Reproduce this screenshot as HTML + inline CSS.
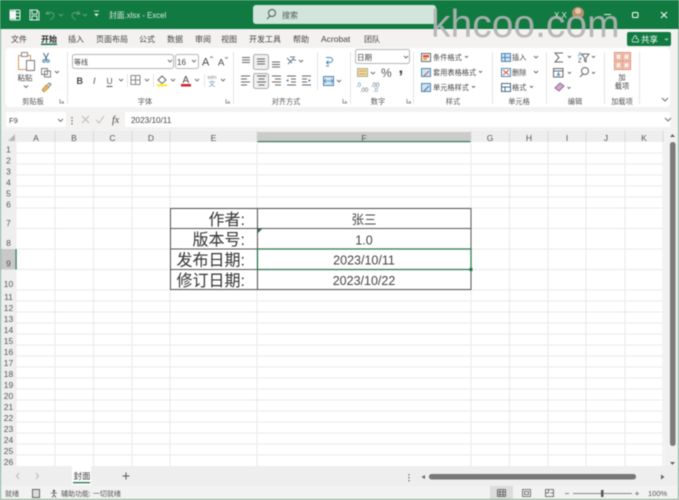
<!DOCTYPE html>
<html lang="zh"><head><meta charset="utf-8"><title>封面.xlsx - Excel</title>
<style>
html,body{margin:0;padding:0;width:679px;height:500px;overflow:hidden;background:#f3f2f1}
svg{display:block;filter:blur(.4px)}
text{font-family:"Liberation Sans","Noto Sans CJK SC",sans-serif}
.g{font-size:7.2px;fill:#555;text-anchor:middle}
.h{font-size:8.5px;fill:#555;text-anchor:middle}
.r{font-size:8.5px;fill:#555;text-anchor:middle}
.s{font-size:7.2px;fill:#444}
.b{font-size:16px;fill:#333;text-anchor:end}
.c{font-size:12.5px;fill:#444;text-anchor:middle}
.ch{fill:none;stroke:#666;stroke-width:.9}
.i{fill:none;stroke:#666;stroke-width:1}
</style></head><body>
<svg width="679" height="500" viewBox="0 0 679 500" xmlns="http://www.w3.org/2000/svg">
<rect width="679" height="500" fill="#f3f2f1"/>
<!-- title bar -->
<rect width="679" height="29" fill="#117a41"/>
<rect x="10" y="10" width="10" height="10" rx="1" fill="none" stroke="#e8f2ec"/>
<path d="M15 10v10M15 13h5M15 16.500h5" stroke="#e8f2ec" fill="none"/>
<rect x="10" y="11" width="6" height="8" fill="#f4f8f5"/>
<path d="M30 10h7l2 2v8h-9zM32 10v4h5v-4M32 20v-4h5v4" fill="none" stroke="#dcebe2"/>
<path d="M48 11l-2 3h4M47 13.500c3-2 7-1 7 2 0 2-2 3.500-4 4" fill="none" stroke="#5f9f7d"/>
<path d="M59 14l2 2 2-2" fill="none" stroke="#5f9f7d"/>
<path d="M78 11l2 3h-4M79 13.500c-3-2-7-1-7 2 0 2 2 3.500 4 4" fill="none" stroke="#5f9f7d"/>
<path d="M83 14l2 2 2-2" fill="none" stroke="#5f9f7d"/>
<path d="M94 11h5M95 14l1.500 2 1.500-2z" fill="#dcebe2" stroke="#dcebe2" stroke-width=".8"/>
<text x="109" y="18" style="font-size:7.800px;fill:#dcebe2">封面.xlsx - Excel</text>
<rect x="253" y="5" width="183" height="19" rx="3" fill="#d2e5da"/>
<circle cx="272" cy="13" r="3.500" fill="none" stroke="#4d5a52"/><path d="M270 16l-3 3" stroke="#4d5a52"/>
<text x="282" y="18" style="font-size:8px;fill:#4d5a52">搜索</text>
<text x="554" y="18" style="font-size:8px;fill:#e8f2ec">X X</text>
<circle cx="578" cy="13" r="6" fill="#b59070"/><circle cx="578" cy="11" r="3" fill="#e3c6a6"/>
<path d="M604 14.500h7" stroke="#e8f2ec"/>
<rect x="632.500" y="12.500" width="5.500" height="5" rx="1" fill="none" stroke="#fff"/>
<path d="M661 12l6 6M667 12l-6 6" stroke="#fff"/>
<!-- tabs -->
<g style="font-size:8px;fill:#444">
<text x="11" y="42">文件</text><text x="41" y="42" style="font-weight:bold;fill:#222">开始</text>
<text x="68" y="42">插入</text><text x="96" y="42">页面布局</text><text x="139" y="42">公式</text>
<text x="167" y="42">数据</text><text x="195" y="42">审阅</text><text x="221" y="42">视图</text>
<text x="249" y="42">开发工具</text><text x="293" y="42">帮助</text><text x="321" y="42" style="font-size:8.500px">Acrobat</text><text x="364" y="42">团队</text>
</g>
<rect x="41" y="43.500" width="16" height="1.500" fill="#117a41"/>
<rect x="627" y="32" width="44" height="14" rx="2" fill="#117a41"/>
<path d="M632.500 42h6v-2.500l-1.500-1h-1l.8-2-1.800-1-1.500 2v1l-1.500 1z" fill="none" stroke="#e8f2ec" stroke-width=".7"/>
<text x="641" y="42.500" style="font-size:8.500px;fill:#fff">共享</text>
<path d="M665 38.500l1.500 1.500 1.500-1.500" fill="none" stroke="#e8f2ec" stroke-width=".8"/>
<!-- ribbon -->
<rect x="5.500" y="48" width="664.500" height="59" rx="4" fill="#fff"/>
<path d="M67.500 52v52M233.500 52v52M317.500 52v38M350.500 52v52M413.500 52v52M492.500 52v52M546.500 52v52M604.500 52v52M639.500 52v52" stroke="#e3e3e3"/>
<!-- clipboard -->
<path d="M18.500 55.500h12v14h-12z" fill="#fff" stroke="#d09a5c"/><path d="M21.500 52.500h6v4h-6z" fill="#fff" stroke="#888"/>
<rect x="26.500" y="60.500" width="8" height="10" fill="#fff" stroke="#777"/>
<text x="25" y="80.500" class="g" style="font-size:7.500px;fill:#444">粘贴</text><path d="M24 85.500l2 2 2-2" class="ch"/>
<path d="M43.500 53l3.500 7M48.500 53l-3.500 7" stroke="#4a6b8a" fill="none"/><circle cx="44" cy="61" r="1.300" fill="none" stroke="#4a8ab0"/><circle cx="48" cy="61" r="1.300" fill="none" stroke="#4a8ab0"/>
<path d="M41.500 68.500h6v6h-6zM44.500 71h6v6h-6z" fill="#fff" stroke="#777" stroke-width=".9"/>
<path d="M55 71l2 2 2-2" class="ch"/>
<path d="M42 90l4-5 3 2.500-5 4.500z" fill="#e9b960" stroke="#b08840" stroke-width=".7"/><path d="M47 85l2.500-2 1.500 1.500-2.500 2.500" stroke="#777" fill="none"/>
<text x="33" y="104" class="g">剪贴板</text>
<path d="M60 99v4h4M62 101l2 2" stroke="#777" fill="none" stroke-width=".8"/>
<!-- font -->
<rect x="72.500" y="54.500" width="101" height="14" rx="2" fill="#fff" stroke="#b5b5b5"/>
<text x="74" y="64.500" style="font-size:7px;fill:#444">等线</text><path d="M168 60l2 2 2-2" class="ch"/>
<rect x="175.500" y="54.500" width="23" height="14" rx="2" fill="#fff" stroke="#b5b5b5"/>
<text x="177" y="65" style="font-size:8px;fill:#444">16</text><path d="M192 60l2 2 2-2" class="ch"/>
<text x="202" y="65.500" style="font-size:11px;fill:#444">A</text><path d="M210 58l1.500-1.500 1.500 1.500" class="ch" style="stroke-width:.7"/>
<text x="218" y="65.500" style="font-size:9.500px;fill:#444">A</text><path d="M225 57l1.500 1.500 1.500-1.500" class="ch" style="stroke-width:.7"/>
<text x="76.500" y="84" style="font-size:9px;font-weight:bold;fill:#444">B</text>
<text x="93" y="84" style="font-size:9px;font-style:italic;fill:#555">I</text>
<text x="106.500" y="84" style="font-size:8.500px;fill:#555">U</text><path d="M106.500 86.500h6" stroke="#555"/>
<path d="M119 79l2 2 2-2" class="ch"/><path d="M127.500 74v13" stroke="#e3e3e3"/>
<path d="M131 75.500h9v9h-9zM135.500 75.500v9M131 80h9" fill="none" stroke="#888"/>
<path d="M145 79l2 2 2-2" class="ch"/><path d="M153.500 74v13" stroke="#e3e3e3"/>
<path d="M158 80l4-4 4 4-4 3.500z" fill="#fff" stroke="#666"/><rect x="157" y="84" width="10" height="2.500" fill="#ffe94a"/>
<path d="M171 79l2 2 2-2" class="ch"/>
<text x="182.500" y="83" style="font-size:10px;fill:#444">A</text><rect x="181" y="84" width="10" height="2.500" fill="#d6202a"/>
<path d="M195 79l2 2 2-2" class="ch"/><path d="M204.500 74v13" stroke="#e3e3e3"/>
<text x="212" y="79" class="g" style="font-size:5px;fill:#888">wén</text>
<text x="212" y="86" class="g" style="font-size:7px;fill:#6a93b0">文</text>
<path d="M221 79l2 2 2-2" class="ch"/>
<text x="145" y="104" class="g">字体</text>
<path d="M226 99v4h4M228 101l2 2" stroke="#777" fill="none" stroke-width=".8"/>
<!-- alignment -->
<rect x="253.500" y="54.500" width="15" height="15" rx="2" fill="#f0f0f0" stroke="#aaa"/>
<rect x="253.500" y="73.500" width="15" height="15" rx="2" fill="#f0f0f0" stroke="#aaa"/>
<path d="M242 57.500h8M242 60h8M242 62.500h8M257 59h8M257 61.500h8M257 64h8M272 62h8M272 64.500h8M272 67h8" class="i"/>
<path d="M241 76h9M241 79h6M241 82h9M241 85h6M257 76h9M258.500 79h6M257 82h9M258.500 85h6M272 76h9M275 79h6M272 82h9M275 85h6" class="i"/>
<path d="M288 64l6-6M290 57h5M293 60h3" fill="none" stroke="#5a7f9c"/><path d="M287 58l5 5" stroke="#777"/>
<path d="M299 60l2 2 2-2" class="ch"/>
<path d="M287 76h9M287 85h9M291 79h5M291 82h5" class="i"/><path d="M286 80.500l2.500-1.500v3z" fill="#3f8ac0"/>
<path d="M302 76h9M302 85h9M302 79h5M302 82h5" class="i"/><path d="M311 80.500l-2.500-1.500v3z" fill="#3f8ac0"/>
<path d="M326 57.500h4a2.500 2.500 0 0 1 0 5h-3M328.500 60.500l-2 2 2 2M326 66h3" fill="none" stroke="#4a86b5"/>
<rect x="323.500" y="76.500" width="10" height="9" fill="#d6e6f2" stroke="#4a86b5"/><path d="M323.500 81h10M326 79l-2 2 2 2M331 79l2 2-2 2" stroke="#4a86b5" fill="none" stroke-width=".7"/>
<path d="M337 80l2 2 2-2" class="ch"/>
<text x="286" y="104" class="g">对齐方式</text>
<path d="M343 99v4h4M345 101l2 2" stroke="#777" fill="none" stroke-width=".8"/>
<!-- number -->
<rect x="355.500" y="49.500" width="54" height="14" rx="2" fill="#fff" stroke="#b5b5b5"/>
<text x="357" y="60" style="font-size:7.500px;fill:#444">日期</text><path d="M404 56l2 2 2-2" class="ch"/>
<rect x="357.500" y="68.500" width="10" height="8" fill="#f0d9a0" stroke="#8fa87f" stroke-width=".8"/><path d="M359 71h7M359 74h7" stroke="#d98a40" stroke-width=".8"/>
<path d="M371 72l2 2 2-2" class="ch"/>
<text x="381" y="77" style="font-size:12px;fill:#555">%</text>
<text x="398.500" y="73" style="font-size:17px;font-weight:bold;fill:#444">,</text>
<text x="356" y="87" style="font-size:6px;fill:#3f8ac0">.0</text><text x="360" y="92" style="font-size:6px;fill:#666">.00</text>
<text x="371" y="87" style="font-size:6px;fill:#666">.00</text><text x="373" y="92" style="font-size:6px;fill:#3f8ac0">.0</text>
<text x="378" y="104" class="g">数字</text>
<path d="M407 99v4h4M409 101l2 2" stroke="#777" fill="none" stroke-width=".8"/>
<!-- styles -->
<rect x="421.500" y="53.500" width="9" height="8" fill="#fff" stroke="#666"/><rect x="423" y="55" width="6" height="2.500" fill="#d95040"/><rect x="423" y="58" width="4" height="2" fill="#e8a040"/>
<rect x="421.500" y="68.500" width="9" height="8" fill="#cfe2f1" stroke="#4a86b5"/><path d="M424 76l5-5" stroke="#c05a3a"/>
<rect x="421.500" y="83.500" width="9" height="8" fill="#cfe2f1" stroke="#4a86b5"/><path d="M424 91l5-5" stroke="#4a6b8a"/>
<text x="433" y="60" class="s">条件格式</text><path d="M465 56l1.500 1.500 1.500-1.500" class="ch"/>
<text x="433" y="75" class="s">套用表格格式</text><path d="M479 71l1.500 1.500 1.500-1.500" class="ch"/>
<text x="433" y="90" class="s">单元格样式</text><path d="M472 86l1.500 1.500 1.500-1.500" class="ch"/>
<text x="453" y="104" class="g">样式</text>
<!-- cells -->
<rect x="501.500" y="53.500" width="9" height="8" fill="#cfe2f1" stroke="#4a86b5"/><path d="M505 53.500v8M501.500 57.500h9" stroke="#4a86b5"/>
<rect x="501.500" y="68.500" width="9" height="8" fill="#fff" stroke="#4a86b5"/><path d="M503 70l6 5M509 70l-6 5" stroke="#d0503a"/>
<rect x="501.500" y="83.500" width="9" height="8" fill="#fff" stroke="#4a6b8a"/><path d="M501.500 87h9M505 87v4.500" stroke="#4a6b8a"/>
<text x="512" y="60" class="s">插入</text><path d="M534 56l2 2 2-2" class="ch"/>
<text x="512" y="75" class="s">删除</text><path d="M534 71l2 2 2-2" class="ch"/>
<text x="512" y="90" class="s">格式</text><path d="M530 86l1.500 1.500 1.500-1.500" class="ch"/>
<text x="519" y="104" class="g">单元格</text>
<!-- editing -->
<path d="M563 53h-8l4 4.500-4 4.500h8" fill="none" stroke="#666"/><path d="M568 56l1.500 1.500 1.500-1.500" class="ch"/>
<text x="578" y="56.500" style="font-size:6px;fill:#3f7fb0">A</text><text x="578" y="62.500" style="font-size:6px;fill:#444">Z</text>
<path d="M582 54h7l-3 4v4l-1.500-1v-3z" fill="none" stroke="#666"/><path d="M592 56l1.500 1.500 1.500-1.500" class="ch"/>
<rect x="553.500" y="68.500" width="9.500" height="8.500" fill="#fff" stroke="#666"/><path d="M553.500 71h9.500" stroke="#666"/><path d="M558.500 72v3M557 74l1.500 1.500 1.500-1.500" stroke="#3f8ac0" fill="none"/>
<path d="M568 72l1.500 1.500 1.500-1.500" class="ch"/>
<circle cx="585" cy="71" r="3.500" fill="none" stroke="#666"/><path d="M583 74l-3 3" stroke="#666"/><path d="M592 72l1.500 1.500 1.500-1.500" class="ch"/>
<path d="M555 88l5-5 4 3-5 5z" fill="#d9a8c8" stroke="#8a6a9a"/><path d="M567.500 87l1.500 1.500 1.500-1.500" class="ch"/>
<text x="575" y="104" class="g">编辑</text>
<!-- addins -->
<rect x="614.500" y="52.500" width="16" height="17" fill="#fbeee9" stroke="#e08a70"/>
<path d="M622.500 52.500v17M614.500 61h16" stroke="#e08a70"/>
<rect x="616" y="54" width="5" height="5.500" fill="none" stroke="#e08a70" stroke-width=".7"/><rect x="624" y="54" width="5" height="5.500" fill="none" stroke="#e08a70" stroke-width=".7"/><rect x="616" y="62.500" width="5" height="5.500" fill="none" stroke="#e08a70" stroke-width=".7"/><rect x="624" y="62.500" width="5" height="5.500" fill="none" stroke="#e08a70" stroke-width=".7"/>
<text x="622" y="80" class="g" style="fill:#444">加</text><text x="622" y="88.500" class="g" style="fill:#444">载项</text>
<text x="622" y="104" class="g">加载项</text>
<path d="M662 98l3 3 3-3" class="ch"/>
<!-- formula bar -->
<rect x="6" y="112" width="60" height="15" rx="2" fill="#fff"/>
<text x="9" y="123" style="font-size:7.500px;fill:#444">F9</text><path d="M58 119l2.500 2.500 2.500-2.500" class="ch"/>
<path d="M72 117v1.500M72 120v1.500M72 123v1.500" stroke="#555"/>
<path d="M82 116l7 7M89 116l-7 7" stroke="#bbb"/><path d="M96 120l3 3 5-7" fill="none" stroke="#bbb"/>
<text x="112" y="123" style="font-size:10px;font-style:italic;font-family:'Liberation Serif',serif;fill:#444">fx</text>
<rect x="125" y="112" width="545" height="15" rx="2" fill="#fff"/>
<text x="131" y="123" style="font-size:8.200px;fill:#444">2023/10/11</text>
<path d="M665 118l3 3 3-3" class="ch"/>
<!-- sheet -->
<rect x="0" y="131" width="664" height="335" fill="#fff"/>
<rect x="0" y="131" width="664" height="11" fill="#eeeeee"/>
<rect x="0" y="142" width="16.500" height="324" fill="#eeeeee"/>
<rect x="257" y="132" width="214" height="10" fill="#cbcbcb"/><rect x="257" y="141" width="214" height="1.200" fill="#2f7a55"/>
<rect x="0" y="249" width="16.500" height="20.500" fill="#c8c8c8"/><rect x="15.500" y="249" width="1.200" height="20.500" fill="#2f7a55"/>
<path d="M15 134v7h-7z" fill="#b8b8b8"/>
<path d="M55 142v324M93.500 142v324M132 142v324M170 142v324M257 142v324M471 142v324M509.500 142v324M548 142v324M586 142v324M625 142v324M663 142v324M16.500 153h647M16.500 164h647M16.500 175h647M16.500 186h647M16.500 197h647M16.500 208h647M16.500 228.500h647M16.500 249h647M16.500 269.500h647M16.500 290h647M16.500 301h647M16.500 312h647M16.500 323h647M16.500 334h647M16.500 345h647M16.500 356h647M16.500 367h647M16.500 378h647M16.500 389h647M16.500 400h647M16.500 411h647M16.500 422h647M16.500 433h647M16.500 444h647M16.500 455h647" stroke="#e9e9e9" fill="none"/>
<path d="M55 131v11M93.500 131v11M132 131v11M170 131v11M257 131v11M471 131v11M509.500 131v11M548 131v11M586 131v11M625 131v11M663 131v11" stroke="#d8d8d8"/>
<g>
<text x="36" y="141" class="h">A</text><text x="74" y="141" class="h">B</text><text x="112.500" y="141" class="h">C</text><text x="151" y="141" class="h">D</text><text x="213.500" y="141" class="h">E</text><text x="364" y="141" class="h">F</text><text x="490" y="141" class="h">G</text><text x="529" y="141" class="h">H</text><text x="567" y="141" class="h">I</text><text x="606" y="141" class="h">J</text><text x="644" y="141" class="h">K</text>
</g>
<g>
<text x="8.500" y="152.500" class="r">1</text><text x="8.500" y="163.500" class="r">2</text><text x="8.500" y="174.500" class="r">3</text><text x="8.500" y="185.500" class="r">4</text><text x="8.500" y="196.500" class="r">5</text><text x="8.500" y="207.500" class="r">6</text><text x="8.500" y="226" class="r">7</text><text x="8.500" y="246" class="r">8</text><text x="8.500" y="266.500" class="r">9</text><text x="8.500" y="287" class="r">10</text>
<text x="8.500" y="300" class="r">11</text><text x="8.500" y="311" class="r">12</text><text x="8.500" y="322" class="r">13</text><text x="8.500" y="333" class="r">14</text><text x="8.500" y="344" class="r">15</text><text x="8.500" y="355" class="r">16</text><text x="8.500" y="366" class="r">17</text><text x="8.500" y="377" class="r">18</text><text x="8.500" y="388" class="r">19</text><text x="8.500" y="399" class="r">20</text><text x="8.500" y="410" class="r">21</text><text x="8.500" y="421" class="r">22</text><text x="8.500" y="432" class="r">23</text><text x="8.500" y="443" class="r">24</text><text x="8.500" y="454" class="r">25</text><text x="8.500" y="465" class="r">26</text>
</g>
<!-- table -->
<path d="M170.500 208.500h300.500v81H170.500zM257.500 208.500v81M170.500 228.500h300.500M170.500 269.500h87" fill="none" stroke="#555"/>
<path d="M170.500 249h87" stroke="#555"/>
<rect x="257.500" y="249" width="213.500" height="20.500" fill="none" stroke="#217346" stroke-width="1.200"/>
<rect x="469.500" y="268" width="3" height="3" fill="#217346"/>
<path d="M258 229h4l-4 4z" fill="#217346"/>
<text x="245" y="225" class="b">作者:</text><text x="245" y="245" class="b">版本号:</text><text x="245" y="265.500" class="b">发布日期:</text><text x="245" y="286" class="b">修订日期:</text>
<text x="364" y="224" class="c">张三</text><text x="364" y="244.500" class="c">1.0</text><text x="364" y="264.500" class="c">2023/10/11</text><text x="364" y="285" class="c">2023/10/22</text>
<!-- v scroll -->
<rect x="664" y="131" width="15" height="335" fill="#f1f1f1"/>
<path d="M672.500 134l2.500 3h-5z" fill="#666"/><rect x="670" y="142" width="5.500" height="304" rx="2.500" fill="#7c7c7c"/><path d="M672.500 465l2.500-3h-5z" fill="#666"/>
<!-- sheet tabs -->
<rect y="466" width="679" height="20" fill="#eeeeee"/>
<path d="M19 473l-2.500 3 2.500 3M36 473l2.500 3-2.500 3" fill="none" stroke="#bbb"/>
<rect x="72" y="466" width="19" height="19" fill="#fff"/>
<text x="73.500" y="479" style="font-size:8.500px;fill:#444">封面</text><rect x="73" y="482" width="17" height="1.300" fill="#217346"/>
<path d="M126 472.500v7M122.500 476h7" stroke="#555"/>
<path d="M409 474v1.500M409 477v1.500M409 480v1.500" stroke="#555"/>
<path d="M425 475l-3.500 2 3.500 2z" fill="#666"/><rect x="429" y="474" width="207" height="5.500" rx="2.500" fill="#777"/><path d="M661 474.500l3.500 2.500-3.500 2.500z" fill="#666"/>
<!-- status -->
<rect y="486" width="679" height="13" fill="#f2f2f2"/>
<text x="5" y="496" style="font-size:7px;fill:#555">就绪</text>
<rect x="32.500" y="489.500" width="7" height="8" fill="#ddd" stroke="#666"/>
<circle cx="54" cy="491" r="1.200" fill="#555"/><path d="M51 493h6M54 493v2l-2 2.500M54 495l2 2.500" fill="none" stroke="#555" stroke-width=".8"/>
<text x="61" y="496" style="font-size:7px;fill:#555">辅助功能: 一切就绪</text>
<rect x="490" y="486" width="23" height="13" fill="#dcdcdc"/>
<path d="M497.500 489.500h8v7h-8zM500 489.500v7M503 489.500v7M497.500 492h8M497.500 494.500h8" fill="none" stroke="#555" stroke-width=".8"/>
<path d="M522.500 489.500h8v7h-8zM524.500 491.500h4v3h-4z" fill="none" stroke="#555" stroke-width=".8"/>
<path d="M545.500 489.500h8v7h-8zM545.500 493h3v-3.500M553.500 493h-3" fill="none" stroke="#555" stroke-width=".8"/>
<path d="M565 493.500h4M573 493.500h59M635 493.500h4M637 491.500v4" stroke="#888"/>
<rect x="601" y="490" width="2.500" height="7" fill="#555"/>
<text x="648" y="496" style="font-size:7.500px;fill:#555">100%</text>
<!-- edge -->
<path d="M.5 29v470.500h678V29" fill="none" stroke="#7fae95"/>
<!-- watermark -->
<text x="431" y="37" style="font-size:39px;fill:#b3b3b3;fill-opacity:.92">khcoo.com</text>
</svg>
</body></html>
